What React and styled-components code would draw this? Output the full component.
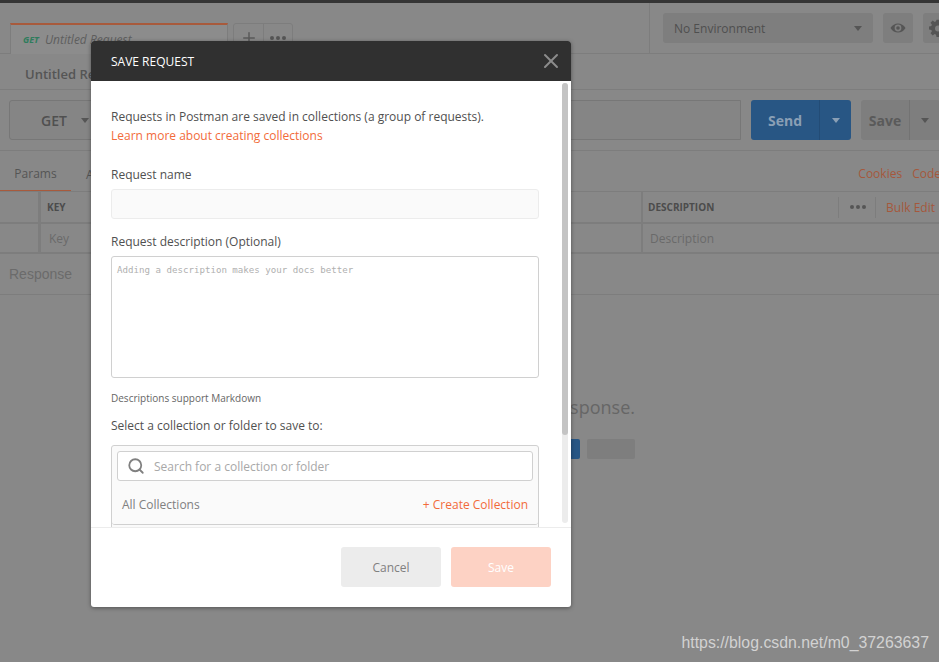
import React from 'react'
import styled, { createGlobalStyle } from 'styled-components'
import { Search, X, Plus } from 'lucide-react'

const Global = createGlobalStyle`
  html, body {
    margin: 0;
    padding: 0;
    height: 100%;
    overflow: hidden;
    background: #888888;
  }
  body {
    font-family: 'Open Sans', 'Liberation Sans', sans-serif;
    font-size: 12px;
    color: #505050;
  }
  * {
    box-sizing: border-box;
  }
`

const Page = styled.div`
  position: relative;
  width: 939px;
  height: 662px;
  overflow: hidden;
  background: #888888;
  border-top: 3px solid #353535;
`

const TopRow = styled.div`
  display: flex;
  height: 51px;
  border-bottom: 1px solid #7d7d7d;
`

const TabArea = styled.div`
  display: flex;
  align-items: flex-end;
  width: 650px;
  flex: none;
  padding-left: 10px;
  border-right: 1px solid #7d7d7d;
`

const Tab = styled.div`
  display: flex;
  align-items: center;
  gap: 6px;
  width: 218px;
  height: 31px;
  padding: 0 12px;
  background: #8c8c8c;
  border-top: 2px solid #a85a3c;
  border-left: 1px solid #7d7d7d;
  border-right: 1px solid #7d7d7d;
  font-style: italic;
  color: #5e5e5e;
  font-size: 12px;
  margin-bottom: -1px;
`

const Method = styled.span`
  font-size: 9px;
  font-weight: 700;
  color: #2f7c5c;
`

const TabButtons = styled.div`
  display: flex;
  margin-left: 5px;
  height: 30px;
  border: 1px solid #7d7d7d;
  border-radius: 3px 3px 0 0;
  align-self: flex-end;
`

const TabButton = styled.div`
  display: flex;
  align-items: center;
  justify-content: center;
  gap: 2px;
  width: 29px;
  color: #5a5a5a;
  & + & {
    border-left: 1px solid #7d7d7d;
  }
`

const EnvArea = styled.div`
  display: flex;
  align-items: center;
  gap: 10px;
  padding-left: 13px;
  flex: 1;
`

const EnvSelect = styled.div`
  display: flex;
  align-items: center;
  justify-content: space-between;
  width: 210px;
  height: 30px;
  padding: 0 11px;
  background: #7e7e7e;
  border-radius: 3px;
  color: #4f4f4f;
  flex: none;
`

const Caret = styled.span`
  display: inline-block;
  width: 0;
  height: 0;
  border-left: 4px solid transparent;
  border-right: 4px solid transparent;
  border-top: 5px solid ${(props) => props.color || '#555555'};
`

const IconBox = styled.div`
  display: flex;
  align-items: center;
  justify-content: center;
  width: 30px;
  height: 30px;
  flex: none;
  background: #7e7e7e;
  border-radius: 3px;
`

const TitleRow = styled.div`
  display: flex;
  align-items: center;
  height: 36px;
  padding: 4px 0 0 25px;
  font-size: 13px;
  font-weight: 600;
  color: #555555;
  border-bottom: 1px solid #7d7d7d;
`

const UrlRow = styled.div`
  display: flex;
  gap: 10px;
  height: 61px;
  padding: 10px 0 10px 9px;
  border-bottom: 1px solid #7d7d7d;
`

const UrlBox = styled.div`
  display: flex;
  width: 732px;
  height: 40px;
  flex: none;
  border: 1px solid #777777;
  border-radius: 3px 0 0 3px;
  background: #858585;
`

const MethodBox = styled.div`
  display: flex;
  align-items: center;
  gap: 14px;
  padding-left: 31px;
  font-size: 14px;
  font-weight: 600;
  color: #505050;
`

const SplitButton = styled.div`
  display: flex;
  flex: none;
  height: 40px;
  border-radius: 3px;
  overflow: hidden;
  font-size: 14px;
  font-weight: 700;
  background: ${(props) => (props.primary ? '#285684' : '#7e7e7e')};
  color: ${(props) => (props.primary ? '#8a9fb5' : '#5a5a5a')};
`

const SplitLabel = styled.div`
  display: flex;
  align-items: center;
  justify-content: center;
  width: ${(props) => props.width}px;
  border-right: 1px solid ${(props) => (props.primary ? '#234c76' : '#737373')};
`

const SplitCaret = styled.div`
  display: flex;
  align-items: center;
  justify-content: center;
  width: ${(props) => props.width}px;
`

const ParamTabs = styled.div`
  display: flex;
  align-items: stretch;
  height: 41px;
  border-bottom: 1px solid #7d7d7d;
  overflow: hidden;
`

const ParamTab = styled.div`
  display: flex;
  align-items: center;
  justify-content: center;
  width: 71px;
  padding-top: 5px;
  color: #555555;
  border-bottom: ${(props) => (props.active ? '2px solid #a85a3c' : 'none')};
  margin-bottom: -1px;
  margin-left: ${(props) => (props.active ? 0 : 15)}px;
  justify-content: ${(props) => (props.active ? 'center' : 'flex-start')};
`

const ParamLinks = styled.div`
  display: flex;
  align-items: center;
  gap: 10px;
  padding-top: 5px;
  margin-left: auto;
  margin-right: -2px;
  color: #a5583c;
`

const TableRow = styled.div`
  display: grid;
  grid-template-columns: 38px 603px 1fr;
  height: ${(props) => props.height}px;
  border-bottom: 2px solid #7d7d7d;
`

const Cell = styled.div`
  display: flex;
  align-items: center;
  padding-left: ${(props) => props.pad || 6}px;
  border-left: ${(props) => props.line || 0}px solid #7d7d7d;
  font-size: ${(props) => (props.head ? '10px' : '12px')};
  font-weight: ${(props) => (props.head ? 700 : 400)};
  color: ${(props) => (props.head ? '#4c4c4c' : '#6a6a6a')};
`

const HeadTools = styled.div`
  display: flex;
  align-items: center;
  margin-left: auto;
  height: 21px;
  font-size: 12px;
  font-weight: 400;
  color: #a5583c;
  white-space: nowrap;
`

const Dots = styled.div`
  display: flex;
  align-items: center;
  gap: 2px;
  height: 100%;
  padding: 0 9px 0 11px;
  border-left: 1px solid #7d7d7d;
  border-right: 1px solid #7d7d7d;
  margin-right: 10px;
`

const Dot = styled.i`
  width: 4px;
  height: 4px;
  border-radius: 50%;
  background: #555555;
`

const BulkEdit = styled.span`
  margin-right: 4px;
`

const ResponseBar = styled.div`
  display: flex;
  align-items: center;
  height: 41px;
  padding-left: 9px;
  font-family: 'Liberation Sans', Arial, sans-serif;
  font-size: 14px;
  color: #6b6b6b;
  border-bottom: 1px solid #7d7d7d;
`

const Empty = styled.div`
  display: flex;
  flex-direction: column;
  align-items: flex-end;
  padding: 100px 304px 0 0;
`

const EmptyText = styled.div`
  font-size: 18px;
  color: #666666;
  line-height: 24px;
`

const EmptyButtons = styled.div`
  display: flex;
  gap: 7px;
  margin-top: 20px;
`

const EmptyButton = styled.div`
  width: ${(props) => props.width}px;
  height: 20px;
  border-radius: 2px;
  background: ${(props) => (props.primary ? '#285684' : '#7e7e7e')};
`

const Watermark = styled.div`
  position: absolute;
  right: 10px;
  bottom: 10px;
  font-family: 'Liberation Sans', Arial, sans-serif;
  font-size: 15.85px;
  color: #d2d2d2;
`

const Modal = styled.div`
  position: absolute;
  left: 91px;
  top: 38px;
  display: flex;
  flex-direction: column;
  width: 480px;
  height: 566px;
  background: #ffffff;
  border-radius: 3px;
  box-shadow: 0 1px 4px rgba(0, 0, 0, 0.4);
  overflow: hidden;
`

const ModalHeader = styled.div`
  display: flex;
  align-items: center;
  justify-content: space-between;
  flex: none;
  height: 40px;
  padding: 0 8px 0 20px;
  background: #303030;
  color: #ffffff;
`

const ModalBody = styled.div`
  flex: 1;
  min-height: 0;
  padding: 26px 32px 0 20px;
  overflow: hidden;
`

const ScrollTrack = styled.div`
  position: absolute;
  left: 471px;
  top: 42px;
  width: 6px;
  height: 440px;
  background: #ececec;
  border-radius: 3px;
`

const ScrollThumb = styled.div`
  height: 352px;
  background: #c4c4c4;
  border-radius: 3px;
`

const Intro = styled.p`
  margin: 0;
  line-height: 19px;
`

const OrangeLink = styled.a`
  color: #f26b3a;
  display: ${(props) => (props.block ? 'block' : 'inline')};
`

const Label = styled.div`
  margin-top: ${(props) => props.top}px;
  margin-bottom: 6px;
  line-height: 17px;
`

const NameInput = styled.div`
  height: 30px;
  background: #fafafa;
  border: 1px solid #ececec;
  border-radius: 3px;
`

const TextArea = styled.div`
  height: 122px;
  padding: 8px 5px;
  border: 1px solid #d0d0d0;
  border-radius: 3px;
  font-family: 'DejaVu Sans Mono', 'Liberation Mono', monospace;
  font-size: 9.15px;
  color: #b0b0b0;
`

const Hint = styled.div`
  margin-top: 14px;
  font-size: 10px;
  line-height: 13px;
  color: #666666;
`

const Picker = styled.div`
  height: 193px;
  padding: 5px;
  margin-top: 11px;
  background: #fafafa;
  border: 1px solid #d0d0d0;
  border-radius: 3px;
`

const SearchBox = styled.div`
  display: flex;
  align-items: center;
  gap: 9px;
  height: 30px;
  padding: 0 9px;
  background: #ffffff;
  border: 1px solid #d0d0d0;
  border-radius: 3px;
  color: #a8a8a8;
`

const PickerHead = styled.div`
  display: flex;
  align-items: center;
  justify-content: space-between;
  height: 44px;
  margin: 0 -5px;
  padding: 3px 10px 0;
  color: #808080;
  border-bottom: 1px solid #d0d0d0;
  border-radius: 0 0 3px 3px;
`

const ModalFooter = styled.div`
  display: flex;
  justify-content: flex-end;
  gap: 10px;
  flex: none;
  height: 80px;
  padding: 19px 20px;
  border-top: 1px solid #ececec;
`

const FooterButton = styled.div`
  display: flex;
  align-items: center;
  justify-content: center;
  width: 100px;
  height: 40px;
  border-radius: 3px;
  background: ${(props) => (props.primary ? '#fdd2c4' : '#ececec')};
  color: ${(props) => (props.primary ? '#ffffff' : '#808080')};
`

function Eye() {
  return (
    <svg width="16" height="16" viewBox="0 0 16 16">
      <path
        d="M0.5 8C2.3 5 5 3.4 8 3.4S13.7 5 15.5 8C13.7 11 11 12.6 8 12.6S2.3 11 0.5 8Z"
        fill="#555555"
      />
      <circle cx="8" cy="8" r="3.4" fill="#7e7e7e" />
      <circle cx="8" cy="8" r="1.8" fill="#555555" />
    </svg>
  )
}

function Gear() {
  return (
    <svg width="18" height="18" viewBox="0 0 24 24">
      <path
        fill="#555555"
        fillRule="evenodd"
        d="M10 1h4l.6 3.1 1.8.8 2.7-1.8 2.8 2.8-1.8 2.7.8 1.8L24 10v4l-3.1.6-.8 1.8 1.8 2.7-2.8 2.8-2.7-1.8-1.8.8L14 24h-4l-.6-3.1-1.8-.8-2.7 1.8-2.8-2.8 1.8-2.7-.8-1.8L0 14v-4l3.1-.6.8-1.8-1.8-2.7 2.8-2.8 2.7 1.8 1.8-.8L10 1Zm2 7.5a4 4 0 1 0 0 8 4 4 0 0 0 0-8Z"
      />
    </svg>
  )
}

export default function App() {
  return (
    <Page>
      <Global />
      <TopRow>
        <TabArea>
          <Tab>
            <Method>GET</Method>
            <span>Untitled Request</span>
          </Tab>
          <TabButtons>
            <TabButton>
              <Plus size={18} strokeWidth={2} />
            </TabButton>
            <TabButton>
              <Dot />
              <Dot />
              <Dot />
            </TabButton>
          </TabButtons>
        </TabArea>
        <EnvArea>
          <EnvSelect>
            No Environment
            <Caret />
          </EnvSelect>
          <IconBox>
            <Eye />
          </IconBox>
          <IconBox>
            <Gear />
          </IconBox>
        </EnvArea>
      </TopRow>
      <TitleRow>Untitled Request</TitleRow>
      <UrlRow>
        <UrlBox>
          <MethodBox>
            GET
            <Caret />
          </MethodBox>
        </UrlBox>
        <SplitButton primary>
          <SplitLabel primary width={69}>Send</SplitLabel>
          <SplitCaret width={31}>
            <Caret color="#8a9fb5" />
          </SplitCaret>
        </SplitButton>
        <SplitButton>
          <SplitLabel width={49}>Save</SplitLabel>
          <SplitCaret width={30}>
            <Caret />
          </SplitCaret>
        </SplitButton>
      </UrlRow>
      <ParamTabs>
        <ParamTab active>Params</ParamTab>
        <ParamTab>Authorization</ParamTab>
        <ParamLinks>
          <span>Cookies</span>
          <span>Code</span>
        </ParamLinks>
      </ParamTabs>
      <TableRow height={32}>
        <Cell />
        <Cell head line={3}>KEY</Cell>
        <Cell head line={2} pad={5}>
          DESCRIPTION
          <HeadTools>
            <Dots>
              <Dot />
              <Dot />
              <Dot />
            </Dots>
            <BulkEdit>Bulk Edit</BulkEdit>
          </HeadTools>
        </Cell>
      </TableRow>
      <TableRow height={30}>
        <Cell />
        <Cell line={3} pad={8}>Key</Cell>
        <Cell line={2} pad={7}>Description</Cell>
      </TableRow>
      <ResponseBar>Response</ResponseBar>
      <Empty>
        <EmptyText>Hit Send to get a response.</EmptyText>
        <EmptyButtons>
          <EmptyButton primary width={100} />
          <EmptyButton width={48} />
        </EmptyButtons>
      </Empty>
      <Watermark>https://blog.csdn.net/m0_37263637</Watermark>
      <Modal>
        <ModalHeader>
          SAVE REQUEST
          <X size={24} color="#8c8c8c" strokeWidth={2} />
        </ModalHeader>
        <ModalBody>
          <Intro>
            Requests in Postman are saved in collections (a group of requests).
            <OrangeLink block>Learn more about creating collections</OrangeLink>
          </Intro>
          <Label top={21}>Request name</Label>
          <NameInput />
          <Label top={14}>Request description (Optional)</Label>
          <TextArea>Adding a description makes your docs better</TextArea>
          <Hint>Descriptions support Markdown</Hint>
          <Label top={12}>Select a collection or folder to save to:</Label>
          <Picker>
            <SearchBox>
              <Search size={18} color="#808080" strokeWidth={2.4} />
              Search for a collection or folder
            </SearchBox>
            <PickerHead>
              All Collections
              <OrangeLink>+ Create Collection</OrangeLink>
            </PickerHead>
          </Picker>
        </ModalBody>
        <ScrollTrack>
          <ScrollThumb />
        </ScrollTrack>
        <ModalFooter>
          <FooterButton>Cancel</FooterButton>
          <FooterButton primary>Save</FooterButton>
        </ModalFooter>
      </Modal>
    </Page>
  )
}
